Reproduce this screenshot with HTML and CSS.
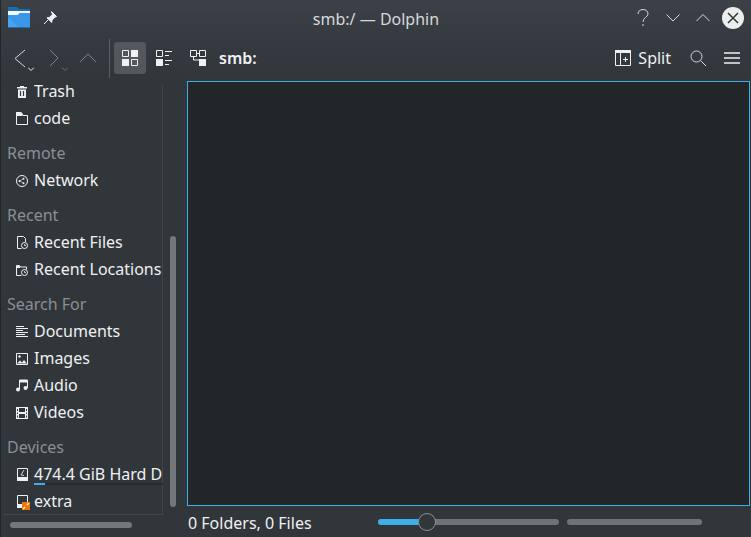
FILE: index.html
```html
<!DOCTYPE html>
<html lang="en">
<head>
  <meta charset="UTF-8">
  <title>smb:/ — Dolphin</title>
  <link rel="stylesheet" href="styles.css">
</head>
<body>
  <div class="window">
    <header class="titlebar">
      <svg class="app-icon" width="24" height="22" viewBox="0 0 24 22">
        <path d="M1 1a1 1 0 0 1 1-1h8l2 2h10a1 1 0 0 1 1 1v5H1z" fill="#1b6fa8"/>
        <path d="M1 4h22v2H13l-2 2H1z" fill="#f2f7fb"/>
        <path d="M1 8h10l2-2h10v14a1 1 0 0 1-1 1H2a1 1 0 0 1-1-1z" fill="#3a97e8"/>
        <path d="M1 10l11 11H2a1 1 0 0 1-1-1z" fill="#4aa3ee"/>
        <path d="M1 20h22v1H1z" fill="#1f6fb5"/>
      </svg>
      <svg class="pin" width="16" height="16" viewBox="0 0 16 16">
        <path d="M9.500 1.500l5 5-1.400.6-3 3-.4 2.400-4.700-4.700 2.400-.4 3-3zM6 10l-4 4" fill="#eff0f1" stroke="#eff0f1" stroke-width="1"/>
      </svg>
      <div class="title">smb:/ — Dolphin</div>
      <div class="win-buttons">
        <svg width="16" height="18" viewBox="0 0 16 18"><path d="M3 5c0-2.800 2-4.500 5-4.500s5 1.900 5 4.400C13 8.200 8 8.500 8 13M8 15v2" fill="none" stroke="#d6d8da"/></svg>
        <svg width="16" height="16" viewBox="0 0 16 16"><path d="M1.500 4.500l6.500 6.500 6.500-6.500" fill="none" stroke="#d6d8da"/></svg>
        <svg width="16" height="16" viewBox="0 0 16 16"><path d="M1.500 11L8 4.500 14.500 11" fill="none" stroke="#d6d8da"/></svg>
        <span class="close">
          <svg width="12" height="12" viewBox="0 0 12 12"><path d="M1 1l10 10M11 1L1 11" stroke="#31363b" stroke-width="1.500"/></svg>
        </span>
      </div>
    </header>

    <div class="toolbar">
      <div class="nav-btn">
        <svg width="18" height="24" viewBox="0 0 18 24"><path d="M11 5L1 13.500 11 22" fill="none" stroke="#d6d8da"/></svg>
        <svg class="drop" width="6" height="4" viewBox="0 0 6 4"><path d="M0 .5l3 3 3-3" fill="none" stroke="#eff0f1"/></svg>
      </div>
      <div class="nav-btn">
        <svg width="18" height="24" viewBox="0 0 18 24"><path d="M2 5l8 8-8 8" fill="none" stroke="#7f8386"/></svg>
        <svg class="drop" width="6" height="4" viewBox="0 0 6 4"><path d="M0 .5l3 3 3-3" fill="none" stroke="#6f7376"/></svg>
      </div>
      <svg class="up" width="18" height="12" viewBox="0 0 18 12"><path d="M0 10l8-8 8 8" fill="none" stroke="#7f8386"/></svg>
      <span class="sep"></span>
      <div class="view-btn active">
        <svg width="16" height="16" viewBox="0 0 16 16"><path d="M.5.500h6v6h-6z" fill="none" stroke="#eff0f1"/><path d="M9 0h7v7H9zM0 9h7v7H0z" fill="#eff0f1"/><path d="M9.500 9.500h6v6h-6z" fill="none" stroke="#eff0f1"/></svg>
      </div>
      <div class="view-btn">
        <svg width="16" height="16" viewBox="0 0 16 16"><path d="M.5.500h6v6h-6z" fill="none" stroke="#eff0f1"/><path d="M0 9h7v7H0z" fill="#eff0f1"/><path d="M9 1.500h7M9 5.500h4M9 10.500h7M9 14.500h4" stroke="#eff0f1"/></svg>
      </div>
      <div class="view-btn">
        <svg width="16" height="16" viewBox="0 0 16 16"><path d="M.5.500h6v6h-6zM9.500.500h6v6h-6z" fill="none" stroke="#eff0f1"/><path d="M3.500 6.500v3.500h5.500M6.500 3.500h3" fill="none" stroke="#eff0f1"/><path d="M9 9h7v7H9z" fill="#eff0f1"/></svg>
      </div>
      <div class="crumb">smb:</div>
      <div class="split">
        <svg width="16" height="16" viewBox="0 0 16 16"><path d="M.5.500h15v15H.5zM5.500 3v12.500" fill="none" stroke="#eff0f1"/><path d="M0 0h16v3H0z" fill="#eff0f1"/><path d="M10.500 7v5M8 9.500h5" stroke="#eff0f1"/></svg>
        <span>Split</span>
      </div>
      <svg class="search" width="16" height="16" viewBox="0 0 16 16"><circle cx="6.500" cy="6.500" r="5.500" fill="none" stroke="#d6d8da"/><path d="M10.500 10.500L16 16" stroke="#d6d8da"/></svg>
      <svg class="menu" width="16" height="14" viewBox="0 0 16 14"><path d="M0 2h16M0 7h16M0 12h16" stroke="#eff0f1" stroke-width="1.500"/></svg>
    </div>

    <div class="main">
      <aside class="sidebar">
        <div class="places-clip">
          <ul class="places">
            <li class="row"><svg width="12" height="12" viewBox="0 0 12 12"><path d="M1 1h10v1.500H1zM4 0h4v1H4zM2 3.500h8V12H2z" fill="#eff0f1"/><path d="M4.500 5v5M7.500 5v5" stroke="#31363b" stroke-width="1.200"/></svg>Trash</li>
            <li class="row"><svg width="12" height="13" viewBox="0 0 12 13"><path d="M.5 3.500v9h11v-9H6.500" fill="none" stroke="#eff0f1"/><path d="M0 0h5l2 2v1L5.500 4H0z" fill="#eff0f1"/></svg>code</li>
            <li class="heading">Remote</li>
            <li class="row"><svg width="12" height="12" viewBox="0 0 12 12"><circle cx="6" cy="6" r="5.500" fill="none" stroke="#eff0f1"/><circle cx="3.500" cy="6" r="1" fill="#eff0f1"/><circle cx="7.500" cy="3.800" r="1" fill="#eff0f1"/><circle cx="7.500" cy="8.200" r="1" fill="#eff0f1"/><path d="M3.500 6l4-2.200M3.500 6l4 2.200" stroke="#eff0f1" stroke-width=".6"/></svg>Network</li>
            <li class="heading">Recent</li>
            <li class="row"><svg width="12" height="13" viewBox="0 0 12 13"><path d="M1.500.500h6l2 2v3.500M1.500.500v12h4" fill="none" stroke="#eff0f1"/><circle cx="8.500" cy="9.500" r="3" fill="none" stroke="#eff0f1"/><path d="M8.500 8v1.500H10" fill="none" stroke="#eff0f1" stroke-width=".8"/></svg>Recent Files</li>
            <li class="row"><svg width="12" height="13" viewBox="0 0 12 13"><path d="M.5 12.500V2.500h3l1 1.500h6v2.500M.5 12.500h5" fill="none" stroke="#eff0f1"/><path d="M1 3h3v2H1z" fill="#eff0f1"/><circle cx="8.500" cy="9.500" r="3" fill="none" stroke="#eff0f1"/><path d="M8.500 8v1.500H10" fill="none" stroke="#eff0f1" stroke-width=".8"/></svg>Recent Locations</li>
            <li class="heading">Search For</li>
            <li class="row"><svg width="12" height="12" viewBox="0 0 12 12"><path d="M0 .5h8M0 2.500h12M0 4.500h7M0 6.500h12M0 8.500h9M0 10.500h12" stroke="#eff0f1"/></svg>Documents</li>
            <li class="row"><svg width="12" height="12" viewBox="0 0 12 12"><path d="M.5.500h11v11H.5z" fill="none" stroke="#eff0f1"/><circle cx="3.500" cy="3.500" r="1.200" fill="#eff0f1"/><path d="M1 10.500l3-3 2 2 2-2.500 3 3.500z" fill="#eff0f1"/></svg>Images</li>
            <li class="row"><svg width="12" height="13" viewBox="0 0 12 13"><path d="M3.500 10.500V1h8v8" fill="none" stroke="#eff0f1"/><path d="M3.500 1h8v2.500h-8z" fill="#eff0f1"/><circle cx="2" cy="10.500" r="2" fill="#eff0f1"/><circle cx="9.500" cy="9" r="2" fill="#eff0f1"/></svg>Audio</li>
            <li class="row"><svg width="12" height="12" viewBox="0 0 12 12"><path d="M0 0h12v12H0z" fill="#eff0f1"/><path d="M3 1h6v4H3zM3 7h6v4H3zM1 2h1v2H1zM1 5.500h1v1.500H1zM1 8.500h1v2H1zM10 2h1v2h-1zM10 5.500h1v1.500h-1zM10 8.500h1v2h-1z" fill="#31363b"/></svg>Videos</li>
            <li class="heading">Devices</li>
            <li class="row device"><svg width="12" height="13" viewBox="0 0 12 13"><path d="M1.500.500h10v12h-10z" fill="none" stroke="#eff0f1"/><path d="M1 9h11v4H1z" fill="#eff0f1"/><path d="M8 2L5 7l3 .5" fill="none" stroke="#eff0f1" stroke-width=".8"/></svg>474.4 GiB Hard Drive
              <span class="capacity"><span class="used"></span></span>
            </li>
            <li class="row"><svg width="12" height="13" viewBox="0 0 12 13"><path d="M1.500.500h10v12h-10z" fill="none" stroke="#eff0f1"/><path d="M1 9h11v4H1z" fill="#eff0f1"/></svg><svg class="emblem" width="8" height="8" viewBox="0 0 8 8"><path d="M0 0h8v8H0z" fill="#f67400"/><path d="M1 7l2-2M5 3l2-2" stroke="#fff" stroke-width="1.400"/></svg>extra</li>
          </ul>
        </div>
        <div class="vscroll"><span class="thumb"></span></div>
        <div class="hscroll"><span class="thumb"></span></div>
      </aside>

      <section class="content">
        <div class="pane"></div>
        <footer class="status">
          <span class="count">0 Folders, 0 Files</span>
          <div class="zoom">
            <span class="zoom-fill"></span>
            <span class="zoom-handle"></span>
          </div>
          <div class="space"></div>
        </footer>
      </section>
    </div>
  </div>
</body>
</html>
```
FILE: styles.css
```css
* {
  box-sizing: border-box;
}
html, body {
  margin: 0;
  padding: 0;
  height: 100%;
  background: #31363b;
  overflow: hidden;
}
body {
  font-family: "Noto Sans", sans-serif;
  font-size: 16px;
  color: #eff0f1;
}
svg {
  display: block;
  flex: none;
}
.window {
  width: 751px;
  height: 537px;
  display: flex;
  flex-direction: column;
  background: #31363b;
  border-left: 1px solid #232629;
}
.titlebar {
  height: 34px;
  flex: none;
  display: flex;
  align-items: center;
  padding: 2px 7px 0 6px;
  background: linear-gradient(#3c4148, #363b41);
  position: relative;
}
.app-icon {
  margin-right: 11px;
}
.title {
  position: absolute;
  left: 0;
  right: 0;
  top: 8px;
  text-align: center;
  line-height: 22px;
  color: #d6d8da;
}
.win-buttons {
  margin-left: auto;
  display: flex;
  align-items: center;
  gap: 14px;
}
.close {
  width: 22px;
  height: 22px;
  margin-left: -3px;
  border-radius: 50%;
  background: #eceded;
  display: flex;
  align-items: center;
  justify-content: center;
}
.toolbar {
  height: 47px;
  flex: none;
  display: flex;
  align-items: center;
  padding: 1px 0 0 13px;
  background: linear-gradient(#363b41, #31363b);
}
.nav-btn {
  width: 34px;
  height: 26px;
  position: relative;
}
.drop {
  position: absolute;
  left: 14px;
  bottom: 0;
}
.up {
  margin-left: -2px;
}
.sep {
  width: 1px;
  height: 39px;
  margin: 0 4px 0 11px;
  background: #5a5e62;
}
.view-btn {
  width: 32px;
  height: 32px;
  margin-right: 2px;
  border-radius: 3px;
  display: flex;
  align-items: center;
  justify-content: center;
}
.view-btn.active {
  background: #54575b;
}
.crumb {
  margin-left: 3px;
  font-weight: 600;
}
.split {
  margin-left: auto;
  display: flex;
  align-items: center;
  gap: 7px;
}
.search {
  margin-left: 19px;
}
.menu {
  margin: 0 11px 0 18px;
}
.main {
  flex: 1;
  min-height: 0;
  display: flex;
}
.sidebar {
  width: 186px;
  flex: none;
  position: relative;
}
.places-clip {
  width: 160px;
  height: 434px;
  overflow: hidden;
  border-bottom: 1px solid #41464b;
  margin-left: 2px;
  background: linear-gradient(#41464b, #41464b) right 5px / 1px 100% no-repeat;
}
.places {
  list-style: none;
  margin: -3px 0 0;
  padding: 0;
}
.row {
  height: 27px;
  display: flex;
  align-items: center;
  gap: 6px;
  padding: 0 0 2px 13px;
  white-space: nowrap;
  position: relative;
}
.row svg {
  width: 12px;
  margin-top: 2px;
}
.heading {
  height: 27px;
  margin-top: 8px;
  padding-left: 4px;
  line-height: 27px;
  color: #8b8f92;
}
.capacity {
  position: absolute;
  left: 31px;
  right: 0;
  bottom: 3px;
  height: 2px;
  background: #272b2f;
}
.used {
  display: block;
  width: 11px;
  height: 2px;
  background: #3daee9;
}
.row .emblem {
  position: absolute;
  left: 19px;
  top: 14px;
  width: 8px;
  margin-top: 0;
}
.vscroll {
  position: absolute;
  left: 169px;
  top: 155px;
  width: 6px;
  height: 271px;
}
.vscroll .thumb, .hscroll .thumb {
  display: block;
  width: 100%;
  height: 100%;
  background: #74787a;
  border-radius: 3px;
}
.hscroll {
  position: absolute;
  left: 9px;
  top: 441px;
  width: 122px;
  height: 6px;
}
.content {
  flex: 1;
  min-width: 0;
  display: flex;
  flex-direction: column;
  padding-right: 1px;
}
.pane {
  flex: 1;
  background: #232629;
  border: 1px solid #3daee9;
}
.status {
  height: 31px;
  flex: none;
  display: flex;
  align-items: center;
  padding: 1px 0 0 1px;
}
.count {
  width: 190px;
  padding-top: 2px;
}
.zoom {
  width: 181px;
  height: 6px;
  border-radius: 3px;
  background: #6f7375;
  position: relative;
}
.zoom-fill {
  display: block;
  width: 42px;
  height: 6px;
  border-radius: 3px;
  background: #3daee9;
}
.zoom-handle {
  position: absolute;
  left: 40px;
  top: -6px;
  width: 18px;
  height: 18px;
  border-radius: 50%;
  background: #31363b;
  border: 1px solid #8b8f92;
}
.space {
  width: 135px;
  height: 6px;
  margin-left: 8px;
  border-radius: 3px;
  background: #6f7375;
}
```
